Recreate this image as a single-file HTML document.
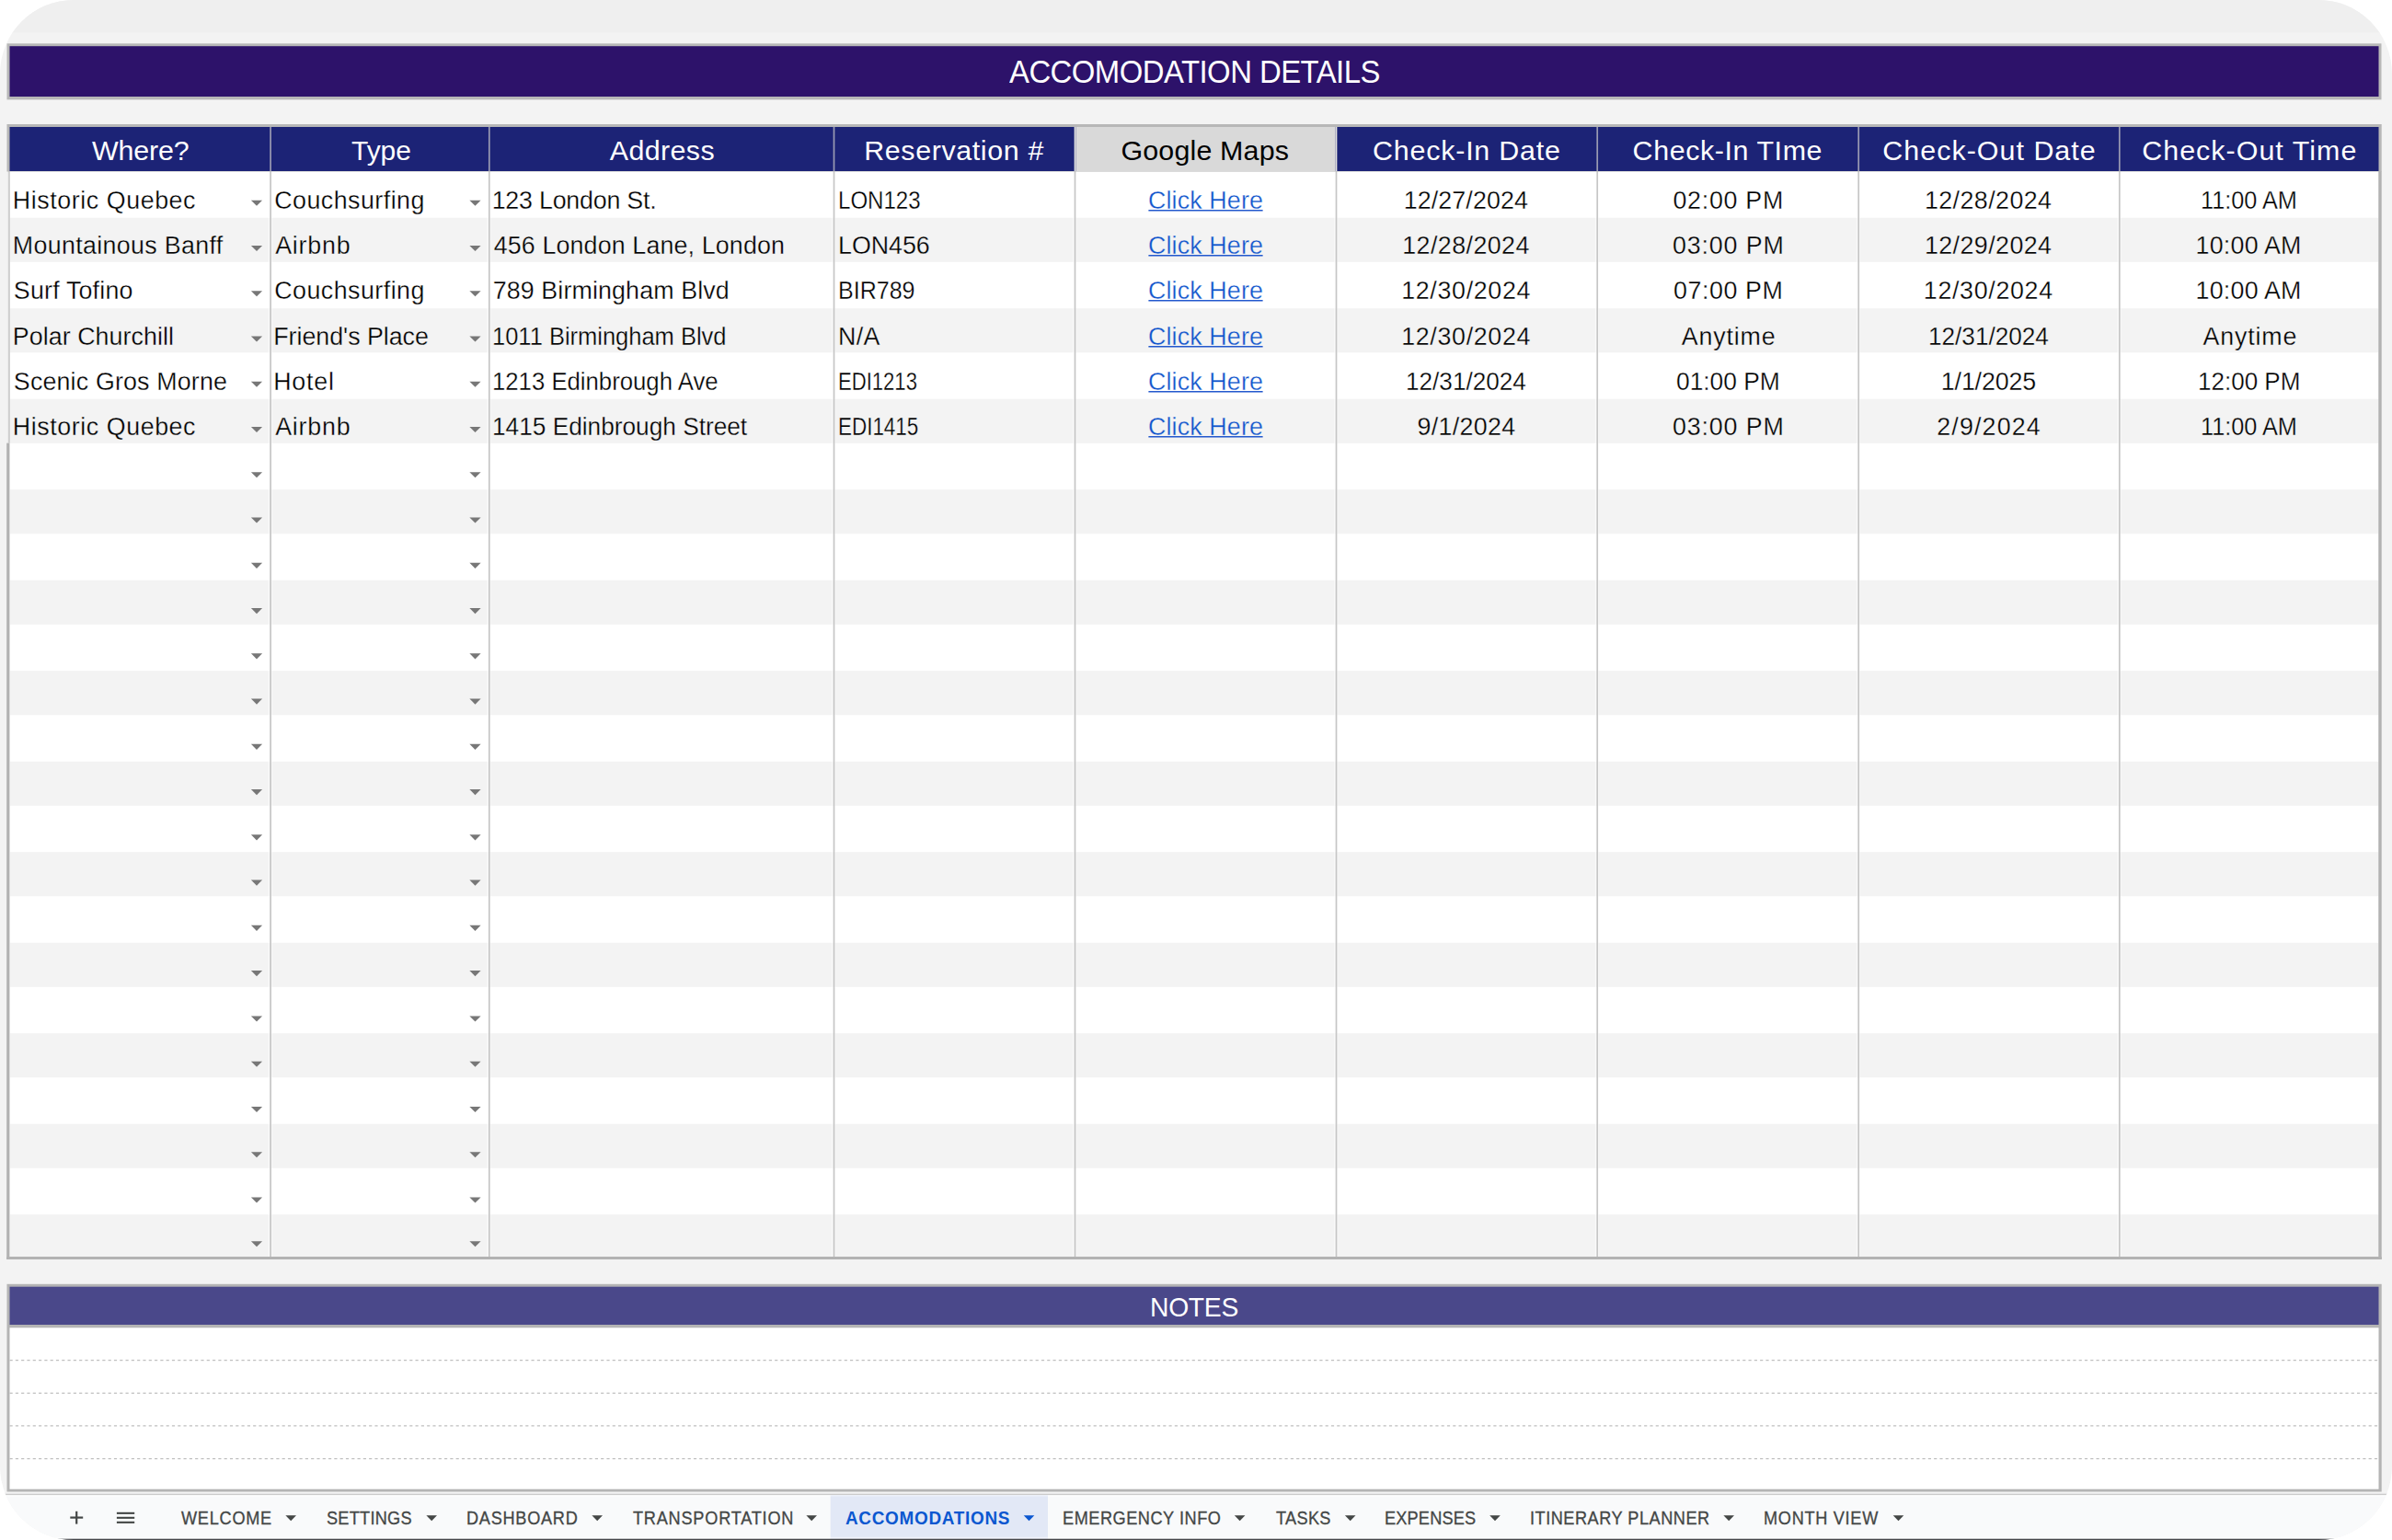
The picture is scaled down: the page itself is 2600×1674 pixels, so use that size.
<!DOCTYPE html><html><head><meta charset="utf-8"><title>Accomodations</title><style>

html,body{margin:0;padding:0;background:#fff;}
body{width:2600px;height:1674px;position:relative;overflow:hidden;font-family:"Liberation Sans",sans-serif;}
#f{position:absolute;left:0;top:0;width:2600px;height:1674px;border-radius:80px;overflow:hidden;background:#f3f3f3;}
#f svg{position:absolute;left:0;top:0;}
.t{position:absolute;white-space:nowrap;line-height:40px;font-kerning:normal;}
.lnk{text-decoration:none;}
.med{-webkit-text-stroke:0.3px #444746;}

</style></head><body><div id="f">
<svg width="2600" height="1674" viewBox="0 0 2600 1674"><rect x="0" y="0" width="2600" height="35.5" fill="#efefef"/>
<rect x="7.5" y="47.3" width="2581" height="61" fill="#b7b7b7"/>
<rect x="10.5" y="50.2" width="2575" height="54.8" fill="#2d126a"/>
<rect x="10.5" y="186" width="2575" height="1181" fill="#fff"/>
<rect x="10.8" y="236.70" width="2574.6" height="48.10" fill="#f3f3f3"/>
<rect x="10.8" y="335.20" width="2574.6" height="48.10" fill="#f3f3f3"/>
<rect x="10.8" y="433.70" width="2574.6" height="48.10" fill="#f3f3f3"/>
<rect x="10.8" y="532.20" width="2574.6" height="48.10" fill="#f3f3f3"/>
<rect x="10.8" y="630.70" width="2574.6" height="48.10" fill="#f3f3f3"/>
<rect x="10.8" y="729.20" width="2574.6" height="48.10" fill="#f3f3f3"/>
<rect x="10.8" y="827.70" width="2574.6" height="48.10" fill="#f3f3f3"/>
<rect x="10.8" y="926.20" width="2574.6" height="48.10" fill="#f3f3f3"/>
<rect x="10.8" y="1024.70" width="2574.6" height="48.10" fill="#f3f3f3"/>
<rect x="10.8" y="1123.20" width="2574.6" height="48.10" fill="#f3f3f3"/>
<rect x="10.8" y="1221.70" width="2574.6" height="48.10" fill="#f3f3f3"/>
<rect x="10.8" y="1320.20" width="2574.6" height="45.80" fill="#f3f3f3"/>
<rect x="291.60" y="186" width="1.7" height="1180" fill="#fff" fill-opacity="0.5"/>
<rect x="294.90" y="186" width="1.1" height="1180" fill="#fff" fill-opacity="0.4"/>
<rect x="529.30" y="186" width="1.7" height="1180" fill="#fff" fill-opacity="0.5"/>
<rect x="532.60" y="186" width="1.1" height="1180" fill="#fff" fill-opacity="0.4"/>
<rect x="904.00" y="186" width="1.7" height="1180" fill="#fff" fill-opacity="0.5"/>
<rect x="907.30" y="186" width="1.1" height="1180" fill="#fff" fill-opacity="0.4"/>
<rect x="1166.00" y="186" width="1.7" height="1180" fill="#fff" fill-opacity="0.5"/>
<rect x="1169.30" y="186" width="1.1" height="1180" fill="#fff" fill-opacity="0.4"/>
<rect x="1450.00" y="186" width="1.7" height="1180" fill="#fff" fill-opacity="0.5"/>
<rect x="1453.30" y="186" width="1.1" height="1180" fill="#fff" fill-opacity="0.4"/>
<rect x="1733.70" y="186" width="1.7" height="1180" fill="#fff" fill-opacity="0.5"/>
<rect x="1737.00" y="186" width="1.1" height="1180" fill="#fff" fill-opacity="0.4"/>
<rect x="2017.70" y="186" width="1.7" height="1180" fill="#fff" fill-opacity="0.5"/>
<rect x="2021.00" y="186" width="1.1" height="1180" fill="#fff" fill-opacity="0.4"/>
<rect x="2301.30" y="186" width="1.7" height="1180" fill="#fff" fill-opacity="0.5"/>
<rect x="2304.60" y="186" width="1.1" height="1180" fill="#fff" fill-opacity="0.4"/>
<rect x="293.25" y="186" width="1.7" height="1180" fill="#c6c6c6"/>
<rect x="530.95" y="186" width="1.7" height="1180" fill="#c6c6c6"/>
<rect x="905.65" y="186" width="1.7" height="1180" fill="#c6c6c6"/>
<rect x="1167.65" y="186" width="1.7" height="1180" fill="#c6c6c6"/>
<rect x="1451.65" y="186" width="1.7" height="1180" fill="#c6c6c6"/>
<rect x="1735.35" y="186" width="1.7" height="1180" fill="#c6c6c6"/>
<rect x="2019.35" y="186" width="1.7" height="1180" fill="#c6c6c6"/>
<rect x="2302.95" y="186" width="1.7" height="1180" fill="#c6c6c6"/>
<rect x="8.8" y="186" width="2.1" height="295.6" fill="#cfcfcf"/>
<rect x="7.2" y="481.6" width="3.2" height="887.4" fill="#b2b2b2"/>
<rect x="2585.3" y="186" width="3.4" height="1183" fill="#b2b2b2"/>
<rect x="7.2" y="1366" width="2581.5" height="3" fill="#b2b2b2"/>
<rect x="7.5" y="135" width="2581.2" height="51.5" fill="#b7b7b7"/>
<rect x="10.5" y="138" width="2575" height="48" fill="#1c2376"/>
<rect x="1169.40" y="138" width="282.20" height="48" fill="#d9d9d9"/>
<rect x="293.25" y="138" width="1.7" height="48" fill="#9a9bb3"/>
<rect x="530.95" y="138" width="1.7" height="48" fill="#9a9bb3"/>
<rect x="905.65" y="138" width="1.7" height="48" fill="#9a9bb3"/>
<rect x="1167.65" y="138" width="1.7" height="48" fill="#e3e3df"/>
<rect x="1451.65" y="138" width="1.7" height="48" fill="#e3e3df"/>
<rect x="1735.35" y="138" width="1.7" height="48" fill="#9a9bb3"/>
<rect x="2019.35" y="138" width="1.7" height="48" fill="#9a9bb3"/>
<rect x="2302.95" y="138" width="1.7" height="48" fill="#9a9bb3"/>
<polygon points="272.90,217.70 285.10,217.70 279.00,223.80" fill="#777"/>
<polygon points="510.40,217.70 522.60,217.70 516.50,223.80" fill="#777"/>
<polygon points="272.90,266.96 285.10,266.96 279.00,273.06" fill="#777"/>
<polygon points="510.40,266.96 522.60,266.96 516.50,273.06" fill="#777"/>
<polygon points="272.90,316.22 285.10,316.22 279.00,322.32" fill="#777"/>
<polygon points="510.40,316.22 522.60,316.22 516.50,322.32" fill="#777"/>
<polygon points="272.90,365.48 285.10,365.48 279.00,371.58" fill="#777"/>
<polygon points="510.40,365.48 522.60,365.48 516.50,371.58" fill="#777"/>
<polygon points="272.90,414.74 285.10,414.74 279.00,420.84" fill="#777"/>
<polygon points="510.40,414.74 522.60,414.74 516.50,420.84" fill="#777"/>
<polygon points="272.90,464.00 285.10,464.00 279.00,470.10" fill="#777"/>
<polygon points="510.40,464.00 522.60,464.00 516.50,470.10" fill="#777"/>
<polygon points="272.90,513.26 285.10,513.26 279.00,519.36" fill="#777"/>
<polygon points="510.40,513.26 522.60,513.26 516.50,519.36" fill="#777"/>
<polygon points="272.90,562.52 285.10,562.52 279.00,568.62" fill="#777"/>
<polygon points="510.40,562.52 522.60,562.52 516.50,568.62" fill="#777"/>
<polygon points="272.90,611.78 285.10,611.78 279.00,617.88" fill="#777"/>
<polygon points="510.40,611.78 522.60,611.78 516.50,617.88" fill="#777"/>
<polygon points="272.90,661.04 285.10,661.04 279.00,667.14" fill="#777"/>
<polygon points="510.40,661.04 522.60,661.04 516.50,667.14" fill="#777"/>
<polygon points="272.90,710.30 285.10,710.30 279.00,716.40" fill="#777"/>
<polygon points="510.40,710.30 522.60,710.30 516.50,716.40" fill="#777"/>
<polygon points="272.90,759.56 285.10,759.56 279.00,765.66" fill="#777"/>
<polygon points="510.40,759.56 522.60,759.56 516.50,765.66" fill="#777"/>
<polygon points="272.90,808.82 285.10,808.82 279.00,814.92" fill="#777"/>
<polygon points="510.40,808.82 522.60,808.82 516.50,814.92" fill="#777"/>
<polygon points="272.90,858.08 285.10,858.08 279.00,864.18" fill="#777"/>
<polygon points="510.40,858.08 522.60,858.08 516.50,864.18" fill="#777"/>
<polygon points="272.90,907.34 285.10,907.34 279.00,913.44" fill="#777"/>
<polygon points="510.40,907.34 522.60,907.34 516.50,913.44" fill="#777"/>
<polygon points="272.90,956.60 285.10,956.60 279.00,962.70" fill="#777"/>
<polygon points="510.40,956.60 522.60,956.60 516.50,962.70" fill="#777"/>
<polygon points="272.90,1005.86 285.10,1005.86 279.00,1011.96" fill="#777"/>
<polygon points="510.40,1005.86 522.60,1005.86 516.50,1011.96" fill="#777"/>
<polygon points="272.90,1055.12 285.10,1055.12 279.00,1061.22" fill="#777"/>
<polygon points="510.40,1055.12 522.60,1055.12 516.50,1061.22" fill="#777"/>
<polygon points="272.90,1104.38 285.10,1104.38 279.00,1110.48" fill="#777"/>
<polygon points="510.40,1104.38 522.60,1104.38 516.50,1110.48" fill="#777"/>
<polygon points="272.90,1153.64 285.10,1153.64 279.00,1159.74" fill="#777"/>
<polygon points="510.40,1153.64 522.60,1153.64 516.50,1159.74" fill="#777"/>
<polygon points="272.90,1202.90 285.10,1202.90 279.00,1209.00" fill="#777"/>
<polygon points="510.40,1202.90 522.60,1202.90 516.50,1209.00" fill="#777"/>
<polygon points="272.90,1252.16 285.10,1252.16 279.00,1258.26" fill="#777"/>
<polygon points="510.40,1252.16 522.60,1252.16 516.50,1258.26" fill="#777"/>
<polygon points="272.90,1301.42 285.10,1301.42 279.00,1307.52" fill="#777"/>
<polygon points="510.40,1301.42 522.60,1301.42 516.50,1307.52" fill="#777"/>
<polygon points="272.90,1349.20 285.10,1349.20 279.00,1355.30" fill="#777"/>
<polygon points="510.40,1349.20 522.60,1349.20 516.50,1355.30" fill="#777"/>
<line x1="1248.4" x2="1372.6" y1="228.85" y2="228.85" stroke="#2358cd" stroke-width="1.5"/>
<line x1="1248.4" x2="1372.6" y1="277.85" y2="277.85" stroke="#2358cd" stroke-width="1.5"/>
<line x1="1248.4" x2="1372.6" y1="326.85" y2="326.85" stroke="#2358cd" stroke-width="1.5"/>
<line x1="1248.4" x2="1372.6" y1="376.85" y2="376.85" stroke="#2358cd" stroke-width="1.5"/>
<line x1="1248.4" x2="1372.6" y1="425.85" y2="425.85" stroke="#2358cd" stroke-width="1.5"/>
<line x1="1248.4" x2="1372.6" y1="474.85" y2="474.85" stroke="#2358cd" stroke-width="1.5"/>
<rect x="7.5" y="1395.8" width="2581.2" height="226" fill="#b4b4b4"/>
<rect x="10.5" y="1443.3" width="2575" height="175.4" fill="#fff"/>
<rect x="10.5" y="1398.7" width="2575" height="41.3" fill="#4a488a"/>
<line x1="10.5" x2="2585.5" y1="1478.6" y2="1478.6" stroke="#c0c0c0" stroke-width="1.3" stroke-dasharray="3.2 3.1"/>
<line x1="10.5" x2="2585.5" y1="1514.3" y2="1514.3" stroke="#c0c0c0" stroke-width="1.3" stroke-dasharray="3.2 3.1"/>
<line x1="10.5" x2="2585.5" y1="1549.9" y2="1549.9" stroke="#c0c0c0" stroke-width="1.3" stroke-dasharray="3.2 3.1"/>
<line x1="10.5" x2="2585.5" y1="1585.6" y2="1585.6" stroke="#c0c0c0" stroke-width="1.3" stroke-dasharray="3.2 3.1"/>
<rect x="0" y="1621.8" width="2600" height="53" fill="#f9fafb"/>
<rect x="0" y="1621.8" width="2600" height="2" fill="#f3f3f3"/>
<rect x="0" y="1623.7" width="2600" height="1.5" fill="#cbcbcb"/>
<rect x="0" y="1625.2" width="2600" height="1.6" fill="#fff" fill-opacity="0.6"/>
<rect x="902.7" y="1625.2" width="236.3" height="49" fill="#e2e8f6"/>
<rect x="902.7" y="1625.2" width="236.3" height="1.6" fill="#fff" fill-opacity="0.3"/>
<rect x="0" y="1670.8" width="2600" height="2" fill="#fff" fill-opacity="0.5"/>
<rect x="0" y="1672.7" width="2600" height="1.4" fill="#47484c"/>
<rect x="76.3" y="1648.5" width="13.9" height="2.2" fill="#444746"/>
<rect x="82.1" y="1642.8" width="2.2" height="13.8" fill="#444746"/>
<rect x="126.9" y="1643.8" width="19.3" height="2.1" fill="#444746"/>
<rect x="126.9" y="1648.8" width="19.3" height="2.1" fill="#444746"/>
<rect x="126.9" y="1653.8" width="19.3" height="2.1" fill="#444746"/>
<polygon points="310.40,1647.3 322.00,1647.3 316.20,1653.2" fill="#444746"/>
<polygon points="463.40,1647.3 475.00,1647.3 469.20,1653.2" fill="#444746"/>
<polygon points="643.40,1647.3 655.00,1647.3 649.20,1653.2" fill="#444746"/>
<polygon points="876.40,1647.3 888.00,1647.3 882.20,1653.2" fill="#444746"/>
<polygon points="1112.70,1647.3 1124.30,1647.3 1118.50,1653.2" fill="#0b57d0"/>
<polygon points="1341.80,1647.3 1353.40,1647.3 1347.60,1653.2" fill="#444746"/>
<polygon points="1461.90,1647.3 1473.50,1647.3 1467.70,1653.2" fill="#444746"/>
<polygon points="1619.20,1647.3 1630.80,1647.3 1625.00,1653.2" fill="#444746"/>
<polygon points="1873.40,1647.3 1885.00,1647.3 1879.20,1653.2" fill="#444746"/>
<polygon points="2057.70,1647.3 2069.30,1647.3 2063.50,1653.2" fill="#444746"/></svg>
<span class="t " style="left:1097.00px;top:58.00px;font-size:34.6px;letter-spacing:-0.536px;color:#fff;font-weight:400;transform-origin:0 0;transform:scaleX(0.950)">ACCOMODATION DETAILS</span>
<span class="t " style="left:99.90px;top:143.00px;font-size:30.4px;letter-spacing:-0.142px;color:#fff;font-weight:400">Where?</span>
<span class="t " style="left:382.20px;top:143.00px;font-size:30.4px;letter-spacing:0.000px;color:#fff;font-weight:400;transform-origin:0 0;transform:scaleX(0.985)">Type</span>
<span class="t " style="left:662.80px;top:143.00px;font-size:30.4px;letter-spacing:0.385px;color:#fff;font-weight:400">Address</span>
<span class="t " style="left:939.20px;top:143.00px;font-size:30.4px;letter-spacing:0.633px;color:#fff;font-weight:400">Reservation #</span>
<span class="t " style="left:1218.40px;top:143.00px;font-size:30.4px;letter-spacing:0.184px;color:#000;font-weight:400">Google Maps</span>
<span class="t " style="left:1492.10px;top:143.00px;font-size:30.4px;letter-spacing:0.796px;color:#fff;font-weight:400">Check-In Date</span>
<span class="t " style="left:1774.60px;top:143.00px;font-size:30.4px;letter-spacing:0.594px;color:#fff;font-weight:400">Check-In TIme</span>
<span class="t " style="left:2046.30px;top:143.00px;font-size:30.4px;letter-spacing:1.040px;color:#fff;font-weight:400">Check-Out Date</span>
<span class="t " style="left:2328.20px;top:143.00px;font-size:30.4px;letter-spacing:1.047px;color:#fff;font-weight:400">Check-Out Time</span>
<span class="t " style="left:1249.94px;top:1400.00px;font-size:30.4px;letter-spacing:-0.301px;color:#fff;font-weight:400;transform-origin:0 0;transform:scaleX(0.930)">NOTES</span>
<span class="t " style="left:13.85px;top:198.00px;font-size:26.8px;letter-spacing:0.573px;color:#000;font-weight:400;-webkit-text-stroke:0.3px #fff">Historic Quebec</span>
<span class="t " style="left:298.20px;top:198.00px;font-size:26.8px;letter-spacing:0.483px;color:#000;font-weight:400;-webkit-text-stroke:0.3px #fff">Couchsurfing</span>
<span class="t " style="left:534.70px;top:198.00px;font-size:26.8px;letter-spacing:-0.218px;color:#000;font-weight:400;-webkit-text-stroke:0.3px #fff">123 London St.</span>
<span class="t " style="left:911.20px;top:198.00px;font-size:26.8px;letter-spacing:0.000px;color:#000;font-weight:400;transform-origin:0 0;transform:scaleX(0.898);-webkit-text-stroke:0.3px #fff">LON123</span>
<a class="t lnk" style="left:1248.05px;top:198.00px;font-size:26.8px;letter-spacing:0.136px;color:#1155cc;font-weight:400;-webkit-text-stroke:0.3px #fff">Click Here</a>
<span class="t " style="left:1525.65px;top:198.00px;font-size:26.8px;letter-spacing:0.132px;color:#000;font-weight:400;-webkit-text-stroke:0.3px #fff">12/27/2024</span>
<span class="t " style="left:1818.50px;top:198.00px;font-size:26.8px;letter-spacing:0.718px;color:#000;font-weight:400;-webkit-text-stroke:0.3px #fff">02:00 PM</span>
<span class="t " style="left:2091.90px;top:198.00px;font-size:26.8px;letter-spacing:0.443px;color:#000;font-weight:400;-webkit-text-stroke:0.3px #fff">12/28/2024</span>
<span class="t " style="left:2391.56px;top:198.00px;font-size:26.8px;letter-spacing:0.000px;color:#000;font-weight:400;transform-origin:0 0;transform:scaleX(0.943);-webkit-text-stroke:0.3px #fff">11:00 AM</span>
<span class="t " style="left:13.85px;top:247.00px;font-size:26.8px;letter-spacing:0.333px;color:#000;font-weight:400;-webkit-text-stroke:0.3px #f3f3f3">Mountainous Banff</span>
<span class="t " style="left:299.20px;top:247.00px;font-size:26.8px;letter-spacing:0.789px;color:#000;font-weight:400;-webkit-text-stroke:0.3px #f3f3f3">Airbnb</span>
<span class="t " style="left:536.70px;top:247.00px;font-size:26.8px;letter-spacing:0.148px;color:#000;font-weight:400;-webkit-text-stroke:0.3px #f3f3f3">456 London Lane, London</span>
<span class="t " style="left:911.00px;top:247.00px;font-size:26.8px;letter-spacing:-0.021px;color:#000;font-weight:400;-webkit-text-stroke:0.3px #f3f3f3">LON456</span>
<a class="t lnk" style="left:1248.05px;top:247.00px;font-size:26.8px;letter-spacing:0.136px;color:#1155cc;font-weight:400;-webkit-text-stroke:0.3px #f3f3f3">Click Here</a>
<span class="t " style="left:1524.25px;top:247.00px;font-size:26.8px;letter-spacing:0.443px;color:#000;font-weight:400;-webkit-text-stroke:0.3px #f3f3f3">12/28/2024</span>
<span class="t " style="left:1818.00px;top:247.00px;font-size:26.8px;letter-spacing:0.861px;color:#000;font-weight:400;-webkit-text-stroke:0.3px #f3f3f3">03:00 PM</span>
<span class="t " style="left:2091.90px;top:247.00px;font-size:26.8px;letter-spacing:0.443px;color:#000;font-weight:400;-webkit-text-stroke:0.3px #f3f3f3">12/29/2024</span>
<span class="t " style="left:2386.50px;top:247.00px;font-size:26.8px;letter-spacing:0.246px;color:#000;font-weight:400;-webkit-text-stroke:0.3px #f3f3f3">10:00 AM</span>
<span class="t " style="left:14.85px;top:296.00px;font-size:26.8px;letter-spacing:0.196px;color:#000;font-weight:400;-webkit-text-stroke:0.3px #fff">Surf Tofino</span>
<span class="t " style="left:298.20px;top:296.00px;font-size:26.8px;letter-spacing:0.483px;color:#000;font-weight:400;-webkit-text-stroke:0.3px #fff">Couchsurfing</span>
<span class="t " style="left:535.70px;top:296.00px;font-size:26.8px;letter-spacing:0.129px;color:#000;font-weight:400;-webkit-text-stroke:0.3px #fff">789 Birmingham Blvd</span>
<span class="t " style="left:911.13px;top:296.00px;font-size:26.8px;letter-spacing:0.000px;color:#000;font-weight:400;transform-origin:0 0;transform:scaleX(0.934);-webkit-text-stroke:0.3px #fff">BIR789</span>
<a class="t lnk" style="left:1248.05px;top:296.00px;font-size:26.8px;letter-spacing:0.136px;color:#1155cc;font-weight:400;-webkit-text-stroke:0.3px #fff">Click Here</a>
<span class="t " style="left:1523.20px;top:296.00px;font-size:26.8px;letter-spacing:0.676px;color:#000;font-weight:400;-webkit-text-stroke:0.3px #fff">12/30/2024</span>
<span class="t " style="left:1818.90px;top:296.00px;font-size:26.8px;letter-spacing:0.603px;color:#000;font-weight:400;-webkit-text-stroke:0.3px #fff">07:00 PM</span>
<span class="t " style="left:2090.85px;top:296.00px;font-size:26.8px;letter-spacing:0.676px;color:#000;font-weight:400;-webkit-text-stroke:0.3px #fff">12/30/2024</span>
<span class="t " style="left:2386.50px;top:296.00px;font-size:26.8px;letter-spacing:0.246px;color:#000;font-weight:400;-webkit-text-stroke:0.3px #fff">10:00 AM</span>
<span class="t " style="left:13.85px;top:346.00px;font-size:26.8px;letter-spacing:0.061px;color:#000;font-weight:400;-webkit-text-stroke:0.3px #f3f3f3">Polar Churchill</span>
<span class="t " style="left:297.20px;top:346.00px;font-size:26.8px;letter-spacing:-0.019px;color:#000;font-weight:400;-webkit-text-stroke:0.3px #f3f3f3">Friend's Place</span>
<span class="t " style="left:534.80px;top:346.00px;font-size:26.8px;letter-spacing:0.000px;color:#000;font-weight:400;transform-origin:0 0;transform:scaleX(0.951);-webkit-text-stroke:0.3px #f3f3f3">1011 Birmingham Blvd</span>
<span class="t " style="left:911.00px;top:346.00px;font-size:26.8px;letter-spacing:0.352px;color:#000;font-weight:400;-webkit-text-stroke:0.3px #f3f3f3">N/A</span>
<a class="t lnk" style="left:1248.05px;top:346.00px;font-size:26.8px;letter-spacing:0.136px;color:#1155cc;font-weight:400;-webkit-text-stroke:0.3px #f3f3f3">Click Here</a>
<span class="t " style="left:1523.20px;top:346.00px;font-size:26.8px;letter-spacing:0.676px;color:#000;font-weight:400;-webkit-text-stroke:0.3px #f3f3f3">12/30/2024</span>
<span class="t " style="left:1827.75px;top:346.00px;font-size:26.8px;letter-spacing:0.834px;color:#000;font-weight:400;-webkit-text-stroke:0.3px #f3f3f3">Anytime</span>
<span class="t " style="left:2095.55px;top:346.00px;font-size:26.8px;letter-spacing:0.000px;color:#000;font-weight:400;transform-origin:0 0;transform:scaleX(0.976);-webkit-text-stroke:0.3px #f3f3f3">12/31/2024</span>
<span class="t " style="left:2394.60px;top:346.00px;font-size:26.8px;letter-spacing:0.834px;color:#000;font-weight:400;-webkit-text-stroke:0.3px #f3f3f3">Anytime</span>
<span class="t " style="left:14.85px;top:395.00px;font-size:26.8px;letter-spacing:0.169px;color:#000;font-weight:400;-webkit-text-stroke:0.3px #fff">Scenic Gros Morne</span>
<span class="t " style="left:297.20px;top:395.00px;font-size:26.8px;letter-spacing:0.774px;color:#000;font-weight:400;-webkit-text-stroke:0.3px #fff">Hotel</span>
<span class="t " style="left:534.78px;top:395.00px;font-size:26.8px;letter-spacing:0.000px;color:#000;font-weight:400;transform-origin:0 0;transform:scaleX(0.960);-webkit-text-stroke:0.3px #fff">1213 Edinbrough Ave</span>
<span class="t " style="left:911.35px;top:395.00px;font-size:26.8px;letter-spacing:0.000px;color:#000;font-weight:400;transform-origin:0 0;transform:scaleX(0.824);-webkit-text-stroke:0.3px #fff">EDI1213</span>
<a class="t lnk" style="left:1248.05px;top:395.00px;font-size:26.8px;letter-spacing:0.136px;color:#1155cc;font-weight:400;-webkit-text-stroke:0.3px #fff">Click Here</a>
<span class="t " style="left:1527.90px;top:395.00px;font-size:26.8px;letter-spacing:0.000px;color:#000;font-weight:400;transform-origin:0 0;transform:scaleX(0.976);-webkit-text-stroke:0.3px #fff">12/31/2024</span>
<span class="t " style="left:1822.02px;top:395.00px;font-size:26.8px;letter-spacing:0.000px;color:#000;font-weight:400;transform-origin:0 0;transform:scaleX(0.982);-webkit-text-stroke:0.3px #fff">01:00 PM</span>
<span class="t " style="left:2109.85px;top:395.00px;font-size:26.8px;letter-spacing:-0.158px;color:#000;font-weight:400;-webkit-text-stroke:0.3px #fff">1/1/2025</span>
<span class="t " style="left:2389.06px;top:395.00px;font-size:26.8px;letter-spacing:0.000px;color:#000;font-weight:400;transform-origin:0 0;transform:scaleX(0.971);-webkit-text-stroke:0.3px #fff">12:00 PM</span>
<span class="t " style="left:13.85px;top:444.00px;font-size:26.8px;letter-spacing:0.573px;color:#000;font-weight:400;-webkit-text-stroke:0.3px #f3f3f3">Historic Quebec</span>
<span class="t " style="left:299.20px;top:444.00px;font-size:26.8px;letter-spacing:0.789px;color:#000;font-weight:400;-webkit-text-stroke:0.3px #f3f3f3">Airbnb</span>
<span class="t " style="left:534.74px;top:444.00px;font-size:26.8px;letter-spacing:0.000px;color:#000;font-weight:400;transform-origin:0 0;transform:scaleX(0.979);-webkit-text-stroke:0.3px #f3f3f3">1415 Edinbrough Street</span>
<span class="t " style="left:911.33px;top:444.00px;font-size:26.8px;letter-spacing:0.000px;color:#000;font-weight:400;transform-origin:0 0;transform:scaleX(0.837);-webkit-text-stroke:0.3px #f3f3f3">EDI1415</span>
<a class="t lnk" style="left:1248.05px;top:444.00px;font-size:26.8px;letter-spacing:0.136px;color:#1155cc;font-weight:400;-webkit-text-stroke:0.3px #f3f3f3">Click Here</a>
<span class="t " style="left:1540.45px;top:444.00px;font-size:26.8px;letter-spacing:0.342px;color:#000;font-weight:400;-webkit-text-stroke:0.3px #f3f3f3">9/1/2024</span>
<span class="t " style="left:1818.00px;top:444.00px;font-size:26.8px;letter-spacing:0.861px;color:#000;font-weight:400;-webkit-text-stroke:0.3px #f3f3f3">03:00 PM</span>
<span class="t " style="left:2105.20px;top:444.00px;font-size:26.8px;letter-spacing:1.171px;color:#000;font-weight:400;-webkit-text-stroke:0.3px #f3f3f3">2/9/2024</span>
<span class="t " style="left:2391.56px;top:444.00px;font-size:26.8px;letter-spacing:0.000px;color:#000;font-weight:400;transform-origin:0 0;transform:scaleX(0.943);-webkit-text-stroke:0.3px #f3f3f3">11:00 AM</span>
<span class="t tab med" style="left:197.00px;top:1630.00px;font-size:19.5px;letter-spacing:0.807px;color:#444746;font-weight:400;transform-origin:0 0;transform:scaleX(0.930)">WELCOME</span>
<span class="t tab med" style="left:355.40px;top:1630.00px;font-size:19.5px;letter-spacing:0.280px;color:#444746;font-weight:400;transform-origin:0 0;transform:scaleX(0.930)">SETTINGS</span>
<span class="t tab med" style="left:507.47px;top:1630.00px;font-size:19.5px;letter-spacing:0.797px;color:#444746;font-weight:400;transform-origin:0 0;transform:scaleX(0.930)">DASHBOARD</span>
<span class="t tab med" style="left:687.80px;top:1630.00px;font-size:19.5px;letter-spacing:0.841px;color:#444746;font-weight:400;transform-origin:0 0;transform:scaleX(0.930)">TRANSPORTATION</span>
<span class="t tab" style="left:919.10px;top:1630.00px;font-size:19.5px;letter-spacing:0.733px;color:#0b57d0;font-weight:700;transform-origin:0 0;transform:scaleX(0.970)">ACCOMODATIONS</span>
<span class="t tab med" style="left:1154.77px;top:1630.00px;font-size:19.5px;letter-spacing:0.574px;color:#444746;font-weight:400;transform-origin:0 0;transform:scaleX(0.930)">EMERGENCY INFO</span>
<span class="t tab med" style="left:1387.00px;top:1630.00px;font-size:19.5px;letter-spacing:0.347px;color:#444746;font-weight:400;transform-origin:0 0;transform:scaleX(0.930)">TASKS</span>
<span class="t tab med" style="left:1505.27px;top:1630.00px;font-size:19.5px;letter-spacing:0.210px;color:#444746;font-weight:400;transform-origin:0 0;transform:scaleX(0.930)">EXPENSES</span>
<span class="t tab med" style="left:1663.17px;top:1630.00px;font-size:19.5px;letter-spacing:0.565px;color:#444746;font-weight:400;transform-origin:0 0;transform:scaleX(0.930)">ITINERARY PLANNER</span>
<span class="t tab med" style="left:1917.37px;top:1630.00px;font-size:19.5px;letter-spacing:0.766px;color:#444746;font-weight:400;transform-origin:0 0;transform:scaleX(0.930)">MONTH VIEW</span>
</div></body></html>
